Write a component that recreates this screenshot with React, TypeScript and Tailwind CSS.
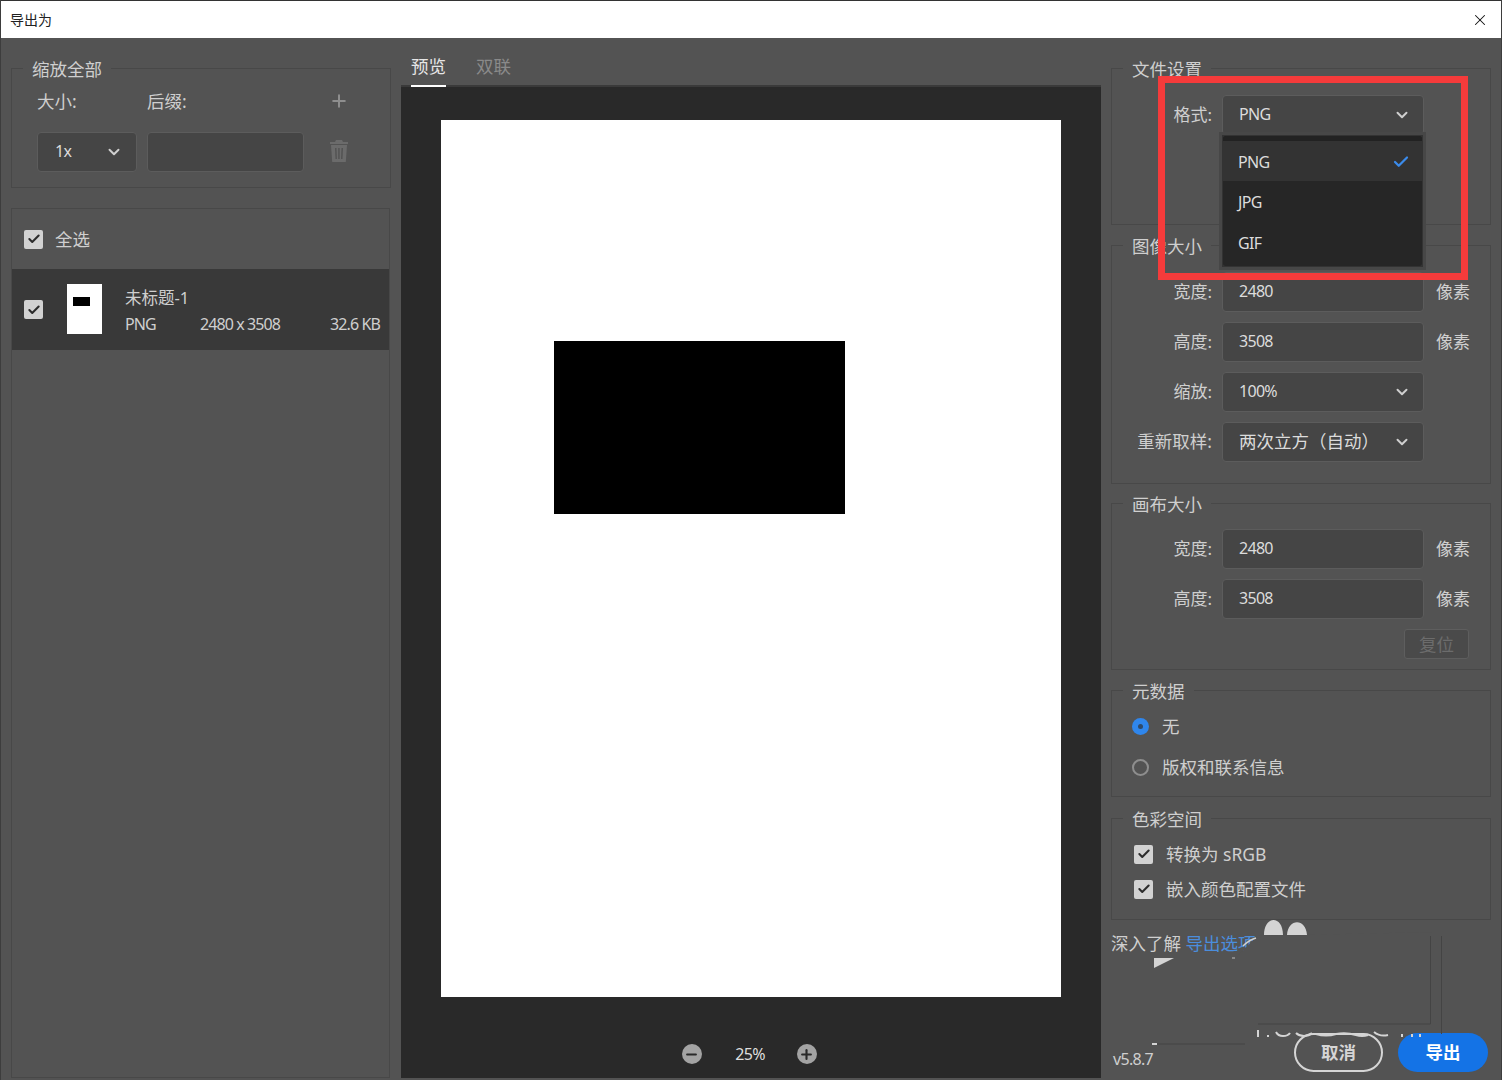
import { Check, ChevronDown, Minus, Plus, X } from "lucide-react";
import type { ReactNode } from "react";

function Fieldset({ title, className, children }: { title: string; className: string; children: ReactNode }) {
  return (
    <div className={`relative border border-[#484848] ${className}`}>
      <span className="absolute -top-[12px] left-[11px] bg-[#535353] px-[9px] text-[17.5px] leading-[24px] text-[#cfcfcf]">
        {title}
      </span>
      {children}
    </div>
  );
}

function Box({ children, className = "" }: { children: ReactNode; className?: string }) {
  return (
    <div className={`flex h-[40px] items-center rounded-[4px] border border-[#5c5c5c] bg-[#454545] text-[16px] tracking-[-0.7px] text-[#dcdcdc] ${className}`}>
      {children}
    </div>
  );
}

function Row({ label, value, unit, select }: { label: string; value: string; unit?: boolean; select?: boolean }) {
  return (
    <div className="flex items-center">
      <span className={`-mt-[1px] w-[100px] text-right text-[#cfcfcf] ${label.length > 4 ? "text-[17.5px]" : "text-[17px]"}`}>{label}</span>
      <Box className="ml-[10px] w-[202px] justify-between pl-[16px] pr-[12px]">
        <span className={`-mt-[2px] ${value.length > 4 ? "text-[17.5px] tracking-normal" : ""}`}>{value}</span>
        {select && <ChevronDown size={18} strokeWidth={2.6} className="text-[#cfcfcf]" />}
      </Box>
      {unit && <span className="-mt-[1px] ml-[12px] text-[17px] text-[#cfcfcf]">像素</span>}
    </div>
  );
}

function CheckBox() {
  return (
    <span className="flex h-[19px] w-[19px] shrink-0 items-center justify-center rounded-[2px] bg-[#d2d2d2]">
      <Check size={14} strokeWidth={3.5} className="text-[#2c2c2c]" />
    </span>
  );
}

function Trash() {
  return (
    <svg width="20" height="24" viewBox="0 0 20 24" fill="#6b6b6b">
      <path d="M7 1h6l1 2h5v2H1V3h5z" />
      <path d="M2 6h16l-1.2 17H3.2zM6 9l.5 11h1.4L7.5 9zm3.2 0v11h1.5V9zm3.3 0-.5 11h1.5L14 9z" fillRule="evenodd" />
    </svg>
  );
}

export default function App() {
  return (
    <div
      className="flex h-[1080px] w-[1502px] flex-col overflow-hidden border-x border-[#3d3d3d] bg-[#535353]"
      style={{ fontFamily: '"Noto Sans", "Noto Sans CJK SC", sans-serif' }}
    >
      {/* title bar */}
      <div className="flex h-[38px] shrink-0 items-center justify-between border-t border-[#333] bg-white pl-[9px] pr-[12px] text-[14px] text-[#222]">
        <span>导出为</span>
        <X size={18} strokeWidth={1.4} className="text-[#111]" />
      </div>

      <div className="flex min-h-0 flex-1">
        {/* left */}
        <div className="flex w-[400px] shrink-0 flex-col pl-[10px] pt-[30px]">
          <Fieldset title="缩放全部" className="h-[120px] w-[380px]">
            <div className="flex pl-[25px] pt-[19px] text-[17.5px] leading-[26px] text-[#cfcfcf]">
              <span className="w-[110px]">大小:</span>
              <span className="w-[182px]">后缀:</span>
              <Plus size={20} strokeWidth={2.4} className="mt-[3px] text-[#8e8e8e]" />
            </div>
            <div className="mt-[18px] flex items-center pl-[25px]">
              <Box className="w-[100px] justify-between pl-[17px] pr-[13px]">
                <span className="-mt-[2px]">1x</span>
                <ChevronDown size={18} strokeWidth={2.6} className="text-[#cfcfcf]" />
              </Box>
              <Box className="ml-[10px] w-[157px]">
                <span />
              </Box>
              <span className="-mt-[2px] ml-[25px]">
                <Trash />
              </span>
            </div>
          </Fieldset>
          <div className="mb-[2px] mt-[20px] min-h-0 w-[379px] flex-1 border border-[#484848]">
            <div className="flex h-[60px] items-center gap-[12px] pl-[12px] text-[17.5px] text-[#cfcfcf]">
              <CheckBox />
              <span>全选</span>
            </div>
            <div className="flex h-[81px] items-center bg-[#393939] pl-[12px] pr-[9px]">
              <CheckBox />
              <div className="-mt-[1px] ml-[24px] h-[50px] w-[35px] bg-white pl-[6px] pt-[13px]">
                <div className="h-[9px] w-[17px] bg-black" />
              </div>
              <div className="ml-[23px] mt-[2px] flex-1">
                <div className="text-[16.5px] leading-[26px] text-[#cfcfcf]">未标题-1</div>
                <div className="flex text-[16px] leading-[26px] tracking-[-0.9px] text-[#cfcfcf]">
                  <span className="w-[75px]">PNG</span>
                  <span className="flex-1">2480 x 3508</span>
                  <span>32.6 KB</span>
                </div>
              </div>
            </div>
          </div>
        </div>

        {/* center */}
        <div className="flex w-[700px] shrink-0 flex-col">
          <div className="flex h-[49px] shrink-0 gap-[30px] border-b-2 border-[#3a3a3a] pl-[10px] text-[17.5px]">
            <span className="h-[49px] border-b-2 border-white pt-[16px] leading-[25px] text-[#e6e6e6]">预览</span>
            <span className="pt-[16px] leading-[25px] text-[#8a8a8a]">双联</span>
          </div>
          <div className="mb-[2px] flex min-h-0 flex-1 flex-col items-center bg-[#292929] pt-[33px]">
            <div className="h-[877px] w-[620px] shrink-0 bg-white pl-[113px] pt-[221px]">
              <div className="h-[173px] w-[291px] bg-black" />
            </div>
            <div className="-ml-[4px] mt-[45px] flex items-center gap-[29px]">
              <span className="flex h-[20px] w-[20px] items-center justify-center rounded-full bg-[#a3a3a3]">
                <Minus size={15} strokeWidth={3.4} className="text-[#292929]" />
              </span>
              <span className="w-[37px] pl-[2px] text-center text-[16px] tracking-[-0.7px] text-[#dedede]">25%</span>
              <span className="flex h-[20px] w-[20px] items-center justify-center rounded-full bg-[#a3a3a3]">
                <Plus size={15} strokeWidth={3.4} className="text-[#292929]" />
              </span>
            </div>
          </div>
        </div>

        {/* right */}
        <div className="relative flex min-w-0 flex-1 flex-col pl-[10px] pt-[30px]">
          <Fieldset title="文件设置" className="h-[157px] w-[380px]">
            <div className="pt-[26px]">
              <Row label="格式:" value="PNG" select />
            </div>
          </Fieldset>
          <Fieldset title="图像大小" className="mt-[20px] h-[239px] w-[380px]">
            <div className="flex flex-col gap-[10px] pt-[26px]">
              <Row label="宽度:" value="2480" unit />
              <Row label="高度:" value="3508" unit />
              <Row label="缩放:" value="100%" select />
              <Row label="重新取样:" value="两次立方（自动）" select />
            </div>
          </Fieldset>
          <Fieldset title="画布大小" className="mt-[19px] h-[167px] w-[380px]">
            <div className="flex flex-col gap-[10px] pt-[25px]">
              <Row label="宽度:" value="2480" unit />
              <Row label="高度:" value="3508" unit />
            </div>
            <div className="mr-[21px] mt-[10px] ml-auto flex h-[30px] w-[65px] items-center justify-center rounded-[3px] border border-[#5e5e5e] bg-[#4a4a4a] text-[17.5px] text-[#6c6c6c]">
              复位
            </div>
          </Fieldset>
          <Fieldset title="元数据" className="mt-[20px] h-[107px] w-[380px]">
            <div className="flex flex-col gap-[17px] pl-[20px] pt-[23px] text-[17.5px] leading-[24px] text-[#cfcfcf]">
              <div className="flex items-center gap-[13px]">
                <span className="flex h-[17px] w-[17px] items-center justify-center rounded-full bg-[#2f86ec]">
                  <span className="h-[5px] w-[5px] rounded-full bg-[#2f4a6a]" />
                </span>
                <span>无</span>
              </div>
              <div className="flex items-center gap-[13px]">
                <span className="h-[17px] w-[17px] rounded-full border-2 border-[#8e8e8e]" />
                <span>版权和联系信息</span>
              </div>
            </div>
          </Fieldset>
          <Fieldset title="色彩空间" className="mt-[21px] h-[102px] w-[380px]">
            <div className="flex flex-col gap-[11px] pl-[22px] pt-[23px] text-[17.5px] leading-[24px] text-[#cfcfcf]">
              <div className="flex items-center gap-[13px]">
                <CheckBox />
                <span>转换为 sRGB</span>
              </div>
              <div className="flex items-center gap-[13px]">
                <CheckBox />
                <span>嵌入颜色配置文件</span>
              </div>
            </div>
          </Fieldset>
          <div className="mt-[11px] text-[17.5px] leading-[24px] text-[#cfcfcf]">
            深入了解 <span className="text-[#4b8ddc]">导出选项</span>
          </div>
          <div className="mt-[78px] flex items-center pl-[2px] pr-[13px]">
            <span className="mt-[13px] text-[16px] tracking-[-0.7px] text-[#cfcfcf]">v5.8.7</span>
            <span className="ml-auto flex h-[39px] w-[89px] items-center justify-center rounded-full border-2 border-[#d5d5d5] text-[17.5px] font-bold text-[#d5d5d5]">
              取消
            </span>
            <span className="ml-[15px] flex h-[39px] w-[90px] items-center justify-center rounded-full bg-[#1473e6] text-[17.5px] font-bold text-white">
              导出
            </span>
          </div>

          {/* leftovers of a removed watermark */}
          <svg className="absolute left-0 top-[870px] h-[172px] w-[400px]" viewBox="1101 908 400 172" fill="none">
            <path d="M1236 958 L1257 936 L1432 932 L1432 1026 L1236 1026 Z" fill="#535353" />
            <path d="M1243 946q6-6 13-8" stroke="#cfcfcf" strokeWidth="1.5" />
            <path d="M1232 958h3" stroke="#9a9a9a" strokeWidth="1.5" />
            <path d="M1430.5 936V1024H1258M1441.5 936V1034M1156 1044H1245" stroke="#444" strokeWidth="1" />
            <path d="M1264 935c0-20 19-20 19 0zM1287 935c1-17 19-17 20 0z" fill="#d4d4d4" />
            <path d="M1154 958h20l-20 10z" fill="#d4d4d4" />
            <path d="M1152 1043h5v2h-5z" fill="#d4d4d4" />
            <path
              d="M1258 1030v7M1268 1035v2M1276 1032q2 4 7 4t7-3M1296 1033q3 3 8 3t8-3M1316 1034q10 3 20 0q10-2 20 1q6 2 12 0M1374 1032q6 5 14 3M1402 1034v3M1412 1034v3M1420 1034v3"
              stroke="#d4d4d4"
              strokeWidth="2"
            />
          </svg>

          {/* open dropdown */}
          <div className="absolute left-[118px] top-[94px] h-[138px] w-[207px] border-[3px] border-[#474747] bg-[#333] p-[1px]">
            <div className="h-full overflow-hidden rounded-[3px] bg-[#262626] text-[16px] tracking-[-0.7px] text-[#dcdcdc]">
              <div className="h-[5px] bg-[#222]" />
              <div className="flex h-[40px] items-center justify-between bg-[#333] pl-[15px] pr-[12px] pt-[1px]">
                <span>PNG</span>
                <Check size={18} strokeWidth={3} className="text-[#3b8beb]" />
              </div>
              <div className="flex h-[41px] items-center pl-[15px]">JPG</div>
              <div className="flex h-[41px] items-center pl-[15px]">GIF</div>
            </div>
          </div>

          {/* red annotation */}
          <div className="absolute left-[57px] top-[38px] h-[204px] w-[310px] border-[7px] border-[#f53b3b]" />
        </div>
      </div>
    </div>
  );
}
